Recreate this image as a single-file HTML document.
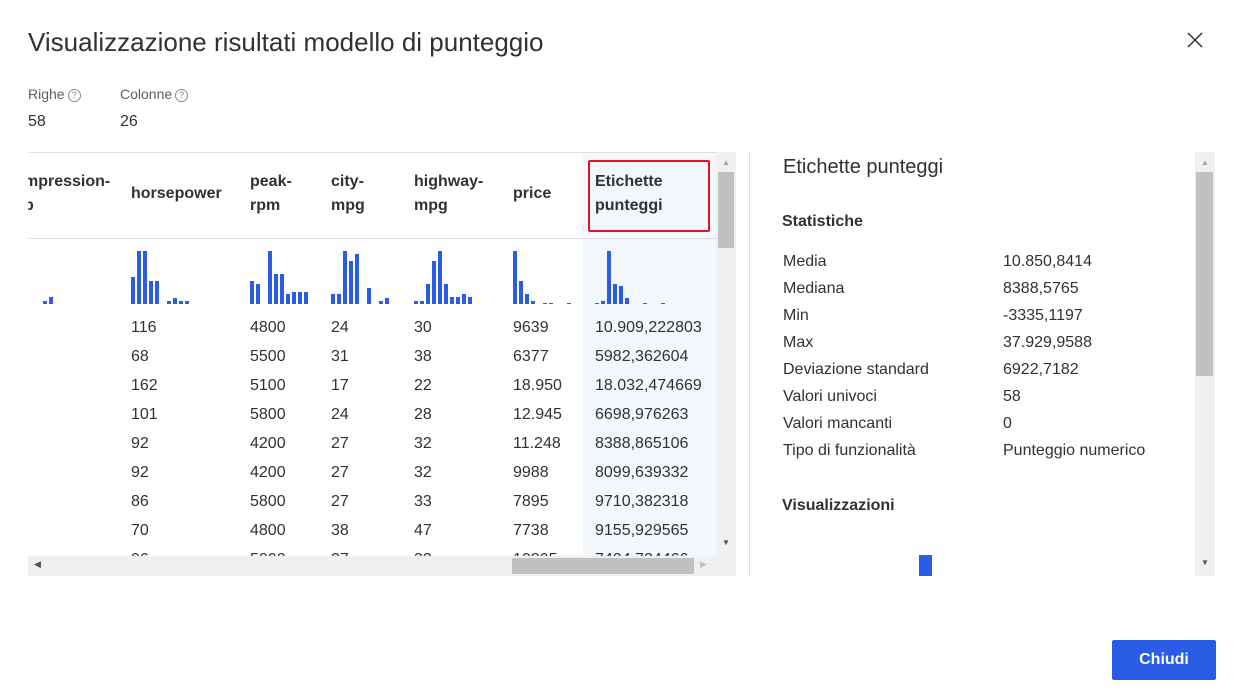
<!DOCTYPE html>
<html><head><meta charset="utf-8"><style>
*{margin:0;padding:0;box-sizing:border-box}
body{width:1237px;height:699px;background:#fff;font-family:"Liberation Sans",sans-serif;color:#323130;position:relative;overflow:hidden}
.a{position:absolute;white-space:nowrap}
.h{font-size:16px;font-weight:bold;line-height:24px;color:#323130}
.c{font-size:16px;line-height:29px}
.hist{position:absolute;top:240px;height:64px;display:flex;align-items:flex-end;gap:2px}
.hist i{display:block;width:4px;background:#2b5ce6}
.q{display:inline-block;width:13px;height:13px;border:1px solid #8a8886;border-radius:50%;font-size:9px;line-height:11px;text-align:center;color:#8a8886;vertical-align:1px;margin-left:3px}
.st{font-size:16px;line-height:27px}
</style></head><body>
<div class="a" style="left:28px;top:25px;font-size:26px;line-height:34px">Visualizzazione risultati modello di punteggio</div>
<svg class="a" style="left:1187px;top:32px" width="16" height="16" viewBox="0 0 16 16"><path d="M1 1L15 15M15 1L1 15" stroke="#323130" stroke-width="1.5"/></svg>
<div class="a" style="left:28px;top:84px;font-size:14px;color:#605e5c;line-height:20px">Righe<span class="q">?</span></div>
<div class="a" style="left:120px;top:84px;font-size:14px;color:#605e5c;line-height:20px">Colonne<span class="q">?</span></div>
<div class="a" style="left:28px;top:111px;font-size:16px;line-height:22px">58</div>
<div class="a" style="left:120px;top:111px;font-size:16px;line-height:22px">26</div>

<div class="a" style="left:28px;top:152px;width:708px;height:424px;overflow:hidden;border-top:1px solid #e1dfdd">
 <div class="a" style="left:555px;top:0;width:133px;height:404px;background:#f1f7fa"></div>
 <div class="a" style="left:0;top:85px;width:688px;height:1px;background:#e1dfdd"></div>
</div>
<div class="a" style="left:588px;top:160px;width:122px;height:72px;border:2px solid #e81123;border-radius:2px"></div>
<div class="a h" style="left:24px;top:170px;clip-path:inset(0 0 0 4px)">mpression-<br>p</div>
<div class="a h" style="left:131px;top:182px">horsepower</div>
<div class="a h" style="left:250px;top:170px">peak-<br>rpm</div>
<div class="a h" style="left:331px;top:170px">city-<br>mpg</div>
<div class="a h" style="left:414px;top:170px">highway-<br>mpg</div>
<div class="a h" style="left:513px;top:182px">price</div>
<div class="a h" style="left:595px;top:170px">Etichette<br>punteggi</div>

<div class="hist" style="left:43px"><i style="height:3px"></i><i style="height:7px"></i></div>
<div class="hist" style="left:131px"><i style="height:27px"></i><i style="height:53px"></i><i style="height:53px"></i><i style="height:23px"></i><i style="height:23px"></i><i style="height:0"></i><i style="height:3px"></i><i style="height:6px"></i><i style="height:3px"></i><i style="height:3px"></i></div>
<div class="hist" style="left:250px"><i style="height:23px"></i><i style="height:20px"></i><i style="height:0"></i><i style="height:53px"></i><i style="height:30px"></i><i style="height:30px"></i><i style="height:10px"></i><i style="height:12px"></i><i style="height:12px"></i><i style="height:12px"></i></div>
<div class="hist" style="left:331px"><i style="height:10px"></i><i style="height:10px"></i><i style="height:53px"></i><i style="height:43px"></i><i style="height:50px"></i><i style="height:0"></i><i style="height:16px"></i><i style="height:0"></i><i style="height:3px"></i><i style="height:6px"></i></div>
<div class="hist" style="left:414px"><i style="height:3px"></i><i style="height:3px"></i><i style="height:20px"></i><i style="height:43px"></i><i style="height:53px"></i><i style="height:20px"></i><i style="height:7px"></i><i style="height:7px"></i><i style="height:10px"></i><i style="height:7px"></i></div>
<div class="hist" style="left:513px"><i style="height:53px"></i><i style="height:23px"></i><i style="height:10px"></i><i style="height:3px"></i><i style="height:0"></i><i style="height:1px"></i><i style="height:1px"></i><i style="height:0"></i><i style="height:0"></i><i style="height:1px"></i></div>
<div class="hist" style="left:595px"><i style="height:1px"></i><i style="height:3px"></i><i style="height:53px"></i><i style="height:20px"></i><i style="height:18px"></i><i style="height:6px"></i><i style="height:0"></i><i style="height:0"></i><i style="height:1px"></i><i style="height:0"></i><i style="height:0"></i><i style="height:1px"></i></div>

<div class="a" style="left:28px;top:313px;width:688px;height:243px;overflow:hidden">
<div class="a c" style="left:103px;top:0">116<br>68<br>162<br>101<br>92<br>92<br>86<br>70<br>96</div>
<div class="a c" style="left:222px;top:0">4800<br>5500<br>5100<br>5800<br>4200<br>4200<br>5800<br>4800<br>5000</div>
<div class="a c" style="left:303px;top:0">24<br>31<br>17<br>24<br>27<br>27<br>27<br>38<br>27</div>
<div class="a c" style="left:386px;top:0">30<br>38<br>22<br>28<br>32<br>32<br>33<br>47<br>33</div>
<div class="a c" style="left:485px;top:0">9639<br>6377<br>18.950<br>12.945<br>11.248<br>9988<br>7895<br>7738<br>10295</div>
<div class="a c" style="left:567px;top:0">10.909,222803<br>5982,362604<br>18.032,474669<br>6698,976263<br>8388,865106<br>8099,639332<br>9710,382318<br>9155,929565<br>7404,734466</div>
</div>
<div class="a" style="left:716px;top:152px;width:20px;height:404px;background:#f0f0f0"></div>
<div class="a" style="left:718px;top:172px;width:16px;height:76px;background:#c1c1c1"></div>
<div class="a" style="left:722px;top:158px;font-size:8px;color:#a0a0a0">▲</div>
<div class="a" style="left:722px;top:538px;font-size:8px;color:#505050">▼</div>
<div class="a" style="left:28px;top:556px;width:708px;height:20px;background:#f0f0f0"></div>
<div class="a" style="left:512px;top:558px;width:182px;height:16px;background:#c1c1c1"></div>
<div class="a" style="left:34px;top:559px;font-size:9px;color:#505050">◀</div>
<div class="a" style="left:700px;top:559px;font-size:9px;color:#c0c0c0">▶</div>

<div class="a" style="left:749px;top:152px;width:1px;height:424px;background:#e1dfdd"></div>
<div class="a" style="left:783px;top:154px;font-size:20px;line-height:26px">Etichette punteggi</div>
<div class="a" style="left:782px;top:211px;font-size:16px;font-weight:bold;line-height:22px">Statistiche</div>
<div class="a st" style="left:783px;top:248px">Media<br>Mediana<br>Min<br>Max<br>Deviazione standard<br>Valori univoci<br>Valori mancanti<br>Tipo di funzionalità</div>
<div class="a st" style="left:1003px;top:248px">10.850,8414<br>8388,5765<br>-3335,1197<br>37.929,9588<br>6922,7182<br>58<br>0<br>Punteggio numerico</div>
<div class="a" style="left:782px;top:495px;font-size:16px;font-weight:bold;line-height:22px">Visualizzazioni</div>
<div class="a" style="left:919px;top:555px;width:13px;height:21px;background:#2b5ce6"></div>
<div class="a" style="left:1195px;top:152px;width:20px;height:424px;background:#f0f0f0"></div>
<div class="a" style="left:1196px;top:172px;width:17px;height:204px;background:#c1c1c1"></div>
<div class="a" style="left:1201px;top:158px;font-size:8px;color:#a0a0a0">▲</div>
<div class="a" style="left:1201px;top:558px;font-size:8px;color:#505050">▼</div>

<div class="a" style="left:1112px;top:640px;width:104px;height:40px;background:#2b5ce6;border-radius:2px;color:#fff;font-size:16px;font-weight:bold;text-align:center;line-height:40px">Chiudi</div>
</body></html>
